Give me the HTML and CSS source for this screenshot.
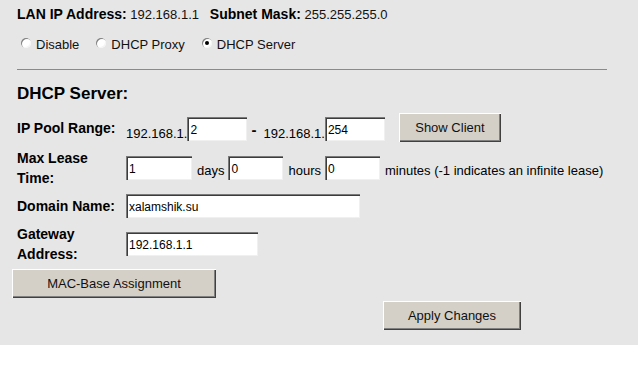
FILE: index.html
```html
<!DOCTYPE html>
<html lang="en">
<head>
    <meta charset="UTF-8">
    <title>LAN Interface Setup</title>
    <link rel="stylesheet" href="styles.css">
</head>
<body>
    <div class="page">
        <div class="info">
            <b>LAN IP Address:</b> 192.168.1.1 &nbsp; <b>Subnet Mask:</b> 255.255.255.0
        </div>

        <div class="modes">
            <label class="mode"><input type="radio" name="dhcp" value="0"> Disable</label>
            <label class="mode"><input type="radio" name="dhcp" value="1"> DHCP Proxy</label>
            <label class="mode"><input type="radio" name="dhcp" value="2" checked> DHCP Server</label>
        </div>

        <hr class="divider">

        <h2 class="section-title">DHCP Server:</h2>

        <form class="dhcp-form">
            <div class="form-row row-pool">
                <div class="label">IP Pool Range:</div>
                <span class="prefix">192.168.1.</span><input class="field w-60" type="text" value="2">
                <span class="dash">-</span>
                <span class="prefix">192.168.1.</span><input class="field w-60" type="text" value="254">
                <button type="button" class="btn btn-client">Show Client</button>
            </div>

            <div class="form-row">
                <div class="label">Max Lease<br>Time:</div>
                <input class="field w-66" type="text" value="1">
                <span class="unit">days</span>
                <input class="field w-55" type="text" value="0">
                <span class="unit">hours</span>
                <input class="field w-55" type="text" value="0">
                <span class="unit">minutes (-1 indicates an infinite lease)</span>
            </div>

            <div class="form-row">
                <div class="label">Domain Name:</div>
                <input class="field w-234" type="text" value="xalamshik.su">
            </div>

            <div class="form-row">
                <div class="label">Gateway<br>Address:</div>
                <input class="field w-132" type="text" value="192.168.1.1">
            </div>

            <div class="form-row row-mac">
                <button type="button" class="btn btn-mac">MAC-Base Assignment</button>
            </div>

            <div class="form-row row-apply">
                <button type="submit" class="btn btn-apply">Apply Changes</button>
            </div>
        </form>
    </div>
</body>
</html>
```

FILE: styles.css
```css
/* Page base */
body {
    margin: 0;
    background-color: #ffffff;
    font-family: "Liberation Sans", Arial, sans-serif;
    font-size: 13px;
    color: #000;
}

.page {
    width: 638px;
    height: 345px;
    background-color: #e6e6e6;
    box-sizing: border-box;
    padding-left: 17px;
    overflow: hidden;
}

/* Top info line */
.info {
    padding-top: 4px;
    height: 20px;
    line-height: 20px;
    color: #111;
}

.info b {
    color: #000;
    font-size: 14px;
}

/* Mode radios */
.modes {
    margin-top: 10px;
    height: 20px;
    display: flex;
    align-items: center;
    padding-left: 4px;
}

.mode {
    display: flex;
    align-items: center;
    margin-right: 17px;
    color: #111;
}

.mode input {
    appearance: none;
    -webkit-appearance: none;
    width: 10px;
    height: 10px;
    margin: 0 5px 2px 0;
    border-radius: 50%;
    background: #fff;
    box-shadow: inset 1px 1px 0 #808080, inset -1px -1px 0 #f4f4f4;
    position: relative;
}

.mode input:checked::after {
    content: "";
    position: absolute;
    left: 3px;
    top: 3px;
    width: 4px;
    height: 4px;
    border-radius: 50%;
    background: #000;
}

.divider {
    margin: 15px 0 0 0;
    width: 590px;
    border: none;
    border-top: 1px solid #8a8a8a;
    height: 0;
}

.section-title {
    margin: 13px 0 0 0;
    font-size: 17px;
    line-height: 22px;
}

/* Form rows */
.dhcp-form {
    margin-top: 8px;
    display: flex;
    flex-direction: column;
    gap: 6px;
}

.form-row {
    display: flex;
    align-items: center;
}

.label {
    width: 109px;
    flex-shrink: 0;
    font-weight: bold;
    font-size: 14px;
    line-height: 20px;
}

.row-pool {
    height: 29px;
    align-items: flex-start;
}

.row-pool .label {
    margin-top: 5px;
}

.row-pool .field {
    margin-top: 4px;
}

.prefix {
    margin-top: 13px;
}

.dash {
    font-weight: bold;
    font-size: 15px;
    margin: 8px 7px 0 4px;
}

.unit {
    margin: 5px 4px 0 5px;
}

.field {
    height: 24px;
    box-sizing: border-box;
    border: none;
    padding: 1px 3px 0 3px;
    background: #fff;
    font-family: "Liberation Sans", Arial, sans-serif;
    font-size: 12px;
    color: #000;
    box-shadow: inset 1px 1px 0 #7a7a7a, inset 2px 2px 0 #3c3c3c, inset -1px -1px 0 #f0f0f0;
}

.w-60 { width: 60px; }
.w-66 { width: 66px; }
.w-55 { width: 55px; }
.w-234 { width: 234px; }
.w-132 { width: 132px; }

/* Buttons */
.btn {
    height: 29px;
    box-sizing: border-box;
    border: none;
    background-color: #d4d0c8;
    font-family: "Liberation Sans", Arial, sans-serif;
    font-size: 13px;
    color: #111;
    box-shadow: inset 1px 1px 0 #ffffff, inset -1px -1px 0 #404040, inset -2px -2px 0 #808080;
    cursor: pointer;
}

.btn-client {
    width: 102px;
    margin-left: 14px;
}

.row-mac {
    margin-left: -5px;
    margin-top: -1px;
}

.btn-mac {
    width: 204px;
}

.row-apply {
    margin-top: -3px;
    padding-left: 366px;
}

.btn-apply {
    width: 138px;
}
```
